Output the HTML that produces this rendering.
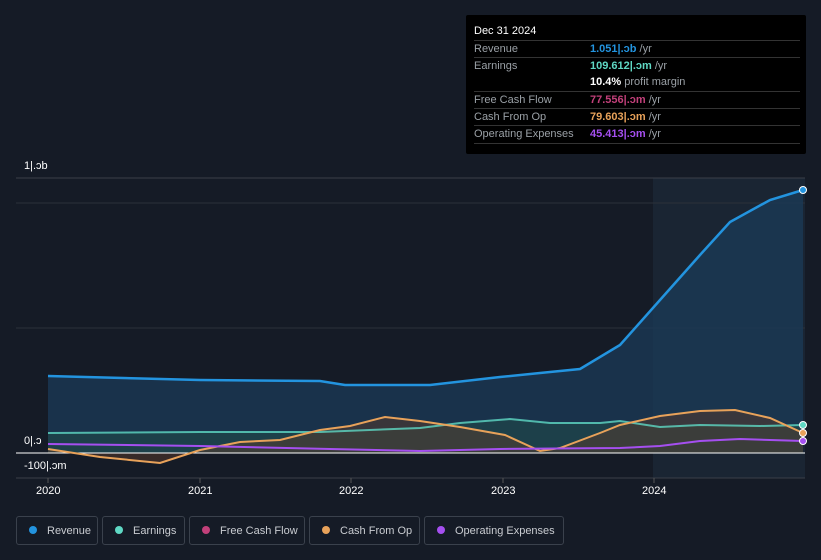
<html><head><style>
body{margin:0;background:#151b26;width:821px;height:560px;overflow:hidden;font-family:"Liberation Sans","DejaVu Sans",sans-serif;position:relative}
.tt{position:absolute;left:466px;top:15px;width:340px;height:139px;background:#000;border-radius:2px}
.tt .h{position:absolute;left:8px;top:10px;color:#fff;font-size:11px}
.row{position:absolute;left:8px;width:326px;height:17px;border-top:1px solid #333;font-size:11px;line-height:17px;color:#9aa0a6}
.row b{font-weight:bold}
.row .v{position:absolute;left:116px}
.lg{position:absolute;top:516px;height:29px;border:1px solid #3a414c;border-radius:3px;color:#c9ccd1;font-size:11px;line-height:29px;box-sizing:border-box}
.lg i{display:inline-block;width:8px;height:8px;border-radius:50%;margin:0 10px 0 12px;vertical-align:-0px}
.ax{position:absolute;color:#fff;font-size:11px}
</style></head><body>
<svg width="821" height="560" style="position:absolute;left:0;top:0">
<rect x="653" y="178" width="152" height="300" fill="#1a2533"/>
<line x1="16" y1="178" x2="805" y2="178" stroke="#3a3f48"/>
<line x1="16" y1="203" x2="805" y2="203" stroke="#2c313a"/>
<line x1="16" y1="328" x2="805" y2="328" stroke="#2c313a"/>
<line x1="16" y1="478" x2="805" y2="478" stroke="#3a3f48"/>
<path d="M48,376 L200,380 L320,381 L345,385 L430,385 L500,377 L540,373 L580,369 L620,345 L660,300 L700,255 L730,222 L770,200 L803,190 L803,453 L48,453Z" fill="#1b3b58" opacity="0.75"/>
<path d="M48,433 L200,432 L320,432 L420,428 L460,423 L510,419 L550,423 L600,423 L620,421 L660,427 L700,425 L760,426 L803,425 L803,453 L48,453Z" fill="#1f4a4a" opacity="0.6"/>
<path d="M48,449 L100,457 L160,463 L200,450 L240,442 L280,440 L320,430 L350,426 L385,417 L420,421 L460,427 L505,435 L540,451 L560,448 L600,433 L620,425 L660,416 L700,411 L735,410 L770,418 L803,433 L803,453 L48,453Z" fill="#5a3a2a" opacity="0.5"/>
<line x1="16" y1="453" x2="805" y2="453" stroke="#fff" stroke-width="1"/>
<path d="M48,376 L200,380 L320,381 L345,385 L430,385 L500,377 L540,373 L580,369 L620,345 L660,300 L700,255 L730,222 L770,200 L803,190" fill="none" stroke="#2394df" stroke-width="2.5"/>
<path d="M48,433 L200,432 L320,432 L420,428 L460,423 L510,419 L550,423 L600,423 L620,421 L660,427 L700,425 L760,426 L803,425" fill="none" stroke="#5fd8c4" stroke-width="2" opacity="0.8"/>
<path d="M48,449 L100,457 L160,463 L200,450 L240,442 L280,440 L320,430 L350,426 L385,417 L420,421 L460,427 L505,435 L540,451 L560,448 L600,433 L620,425 L660,416 L700,411 L735,410 L770,418 L803,433" fill="none" stroke="#e8a25a" stroke-width="2"/>
<path d="M48,444 L200,446 L330,449 L420,451 L500,449 L620,448 L660,446 L700,441 L740,439 L803,441" fill="none" stroke="#a54ff0" stroke-width="2"/>
<circle cx="803" cy="190" r="3.5" fill="#2394df" stroke="#fff"/>
<circle cx="803" cy="425" r="3.5" fill="#5fd8c4" stroke="#fff"/>
<circle cx="803" cy="433" r="3.5" fill="#e8a25a" stroke="#fff"/>
<circle cx="803" cy="441" r="3.5" fill="#a54ff0" stroke="#fff"/>
<g stroke="#555"><line x1="48" y1="478" x2="48" y2="483"/><line x1="200" y1="478" x2="200" y2="483"/><line x1="351" y1="478" x2="351" y2="483"/><line x1="503" y1="478" x2="503" y2="483"/><line x1="654" y1="478" x2="654" y2="483"/></g>
</svg>
<div class="ax" style="left:24px;top:160px">1|.ɔb</div>
<div class="ax" style="left:24px;top:435px">0|.ɔ</div>
<div class="ax" style="left:24px;top:460px">-100|.ɔm</div>
<div class="ax" style="left:36px;top:485px">2020</div>
<div class="ax" style="left:188px;top:485px">2021</div>
<div class="ax" style="left:339px;top:485px">2022</div>
<div class="ax" style="left:491px;top:485px">2023</div>
<div class="ax" style="left:642px;top:485px">2024</div>
<div class="tt">
<div class="h">Dec 31 2024</div>
<div class="row" style="top:25px">Revenue<span class="v"><b style="color:#2394df">1.051|.ɔb</b> /yr</span></div>
<div class="row" style="top:42px">Earnings<span class="v"><b style="color:#5fd8c4">109.612|.ɔm</b> /yr</span></div>
<div class="row" style="top:59px;border-top:none"><span class="v"><b style="color:#fff">10.4%</b> profit margin</span></div>
<div class="row" style="top:76px">Free Cash Flow<span class="v"><b style="color:#c2407a">77.556|.ɔm</b> /yr</span></div>
<div class="row" style="top:93px">Cash From Op<span class="v"><b style="color:#e8a25a">79.603|.ɔm</b> /yr</span></div>
<div class="row" style="top:110px;border-bottom:1px solid #333">Operating Expenses<span class="v"><b style="color:#a54ff0">45.413|.ɔm</b> /yr</span></div>
</div>
<div class="lg" style="left:16px;width:82px"><i style="background:#2394df"></i>Revenue</div>
<div class="lg" style="left:102px;width:83px"><i style="background:#5fd8c4"></i>Earnings</div>
<div class="lg" style="left:189px;width:116px"><i style="background:#c2407a"></i>Free Cash Flow</div>
<div class="lg" style="left:309px;width:111px"><i style="background:#e8a25a"></i>Cash From Op</div>
<div class="lg" style="left:424px;width:140px"><i style="background:#a54ff0"></i>Operating Expenses</div>
</body></html>
